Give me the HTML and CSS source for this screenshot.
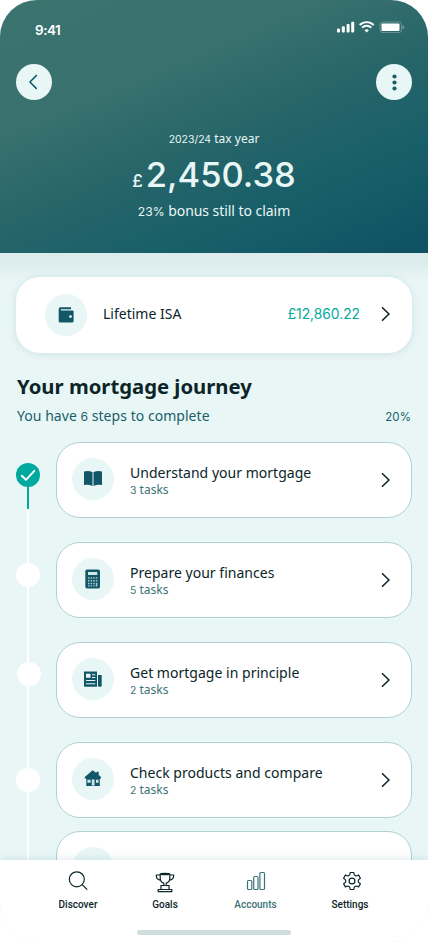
FILE: index.html
```html
<!DOCTYPE html>
<html lang="en">
<head>
<meta charset="utf-8">
<title>Mortgage journey</title>
<link rel="stylesheet" href="styles.css">
</head>
<body>
<div class="screen">
  <header class="hero">
    <div class="status">
      <span class="time">9:41</span>
      <svg class="signals" width="68" height="12" viewBox="0 0 68 12">
        <g fill="#fff">
          <rect x="0" y="7.500" width="3" height="4" rx="1"/><rect x="4.800" y="5.300" width="3" height="6.200" rx="1"/><rect x="9.600" y="3" width="3" height="8.500" rx="1"/><rect x="14.200" y="0.700" width="3" height="10.800" rx="1"/>
        </g>
        <path d="M22.700 4a10 10 0 0 1 14 0M25.100 6.700a6.400 6.400 0 0 1 9.200 0" fill="none" stroke="#fff" stroke-width="1.900"/>
        <path d="M29.700 11.500l-2.200-2.200a3.100 3.100 0 0 1 4.400 0z" fill="#fff"/>
        <rect x="43" y="1" width="21.500" height="10.500" rx="2.500" fill="none" stroke="#fff" stroke-opacity=".28"/>
        <rect x="44.500" y="2.500" width="18" height="7.500" rx="1" fill="#fff"/>
        <path d="M65.500 4.200q1.800.7 1.800 2t-1.800 2z" fill="#fff" fill-opacity=".35"/>
      </svg>
    </div>
    <div class="actions">
      <button class="round" aria-label="Back"><svg width="36" height="36" viewBox="0 0 36 36"><path d="M20.300 11.600L13.900 18l6.400 6.400" fill="none" stroke="#125767" stroke-width="1.500" stroke-linecap="round" stroke-linejoin="round"/></svg></button>
      <button class="round" aria-label="More"><svg width="36" height="36" viewBox="0 0 36 36" fill="#195f69"><circle cx="18.500" cy="12.500" r="2.100"/><circle cx="18.500" cy="18.500" r="2.100"/><circle cx="18.500" cy="24.500" r="2.100"/></svg></button>
    </div>
    <div class="year"><span class="num">2023/24</span> tax year</div>
    <div class="total"><span class="currency">£</span><span class="amount">2,450.38</span></div>
    <div class="bonus"><span class="num">23%</span> bonus still to claim</div>
  </header>

  <main class="content">
    <section class="account">
      <span class="badge"><svg width="42" height="42" viewBox="0 0 42 42"><path d="M15.300 13.200H26v2H15.800q-.5.900.3 1.200H27.400q1.200 0 1.200 1.200V27q0 1.500-1.500 1.500H15.200q-1.500 0-1.500-1.500V15q0-1.800 1.600-1.800z" fill="#125767"/><circle cx="25.500" cy="22.600" r="1.300" fill="#fff"/></svg></span>
      <span class="account-name">Lifetime ISA</span>
      <span class="balance">£12,860.22</span>
      <svg class="chev" width="10" height="16" viewBox="0 0 10 16"><path d="M1.500 1.700L8 8l-6.500 6.300"/></svg>
    </section>

    <h1>Your mortgage journey</h1>
    <div class="summary"><span>You have <span class="num">6</span> steps to complete</span><span class="percent">20%</span></div>

    <section class="journey">
      <div class="rail">
        <span class="dot done"><svg width="24" height="24" viewBox="0 0 24 24"><path d="M5.800 12.800l4.200 4 8.300-9" fill="none" stroke="#fff" stroke-width="1.900" stroke-linecap="round" stroke-linejoin="round"/></svg></span>
        <span class="line complete"></span><span class="line first"></span>
        <span class="dot"></span><span class="line second"></span>
        <span class="dot shifted"></span><span class="line third"></span>
        <span class="dot"></span><span class="line last"></span>
      </div>
      <div class="steps">
        <article class="step">
          <span class="badge"><svg width="42" height="42" viewBox="0 0 42 42"><path d="M20.500 14.200v13.700q-3.600-1.700-8.500-1V13.500q4.800-1.300 8.500.7zM21.500 14.200v13.700q3.600-1.700 8.500-1V13.500q-4.800-1.300-8.500.7z" fill="#125767"/><path d="M21 14.100v13.600" stroke="#78a3aa"/></svg></span>
          <div class="copy"><h2>Understand your mortgage</h2><p><span class="num">3</span> tasks</p></div>
          <svg class="chev" width="10" height="16" viewBox="0 0 10 16"><path d="M1.500 1.700L8 8l-6.500 6.300"/></svg>
        </article>
        <article class="step">
          <span class="badge"><svg width="42" height="42" viewBox="0 0 42 42"><rect x="13.300" y="11.500" width="14.700" height="19" rx="1.800" fill="#125767"/><path d="M16 14h9.300v3H16z" fill="#d3e6e7"/><path d="M16 19.200h1.500v1.500H16zM18.600 19.200h1.500v1.500h-1.500zM21.200 19.200h1.500v1.500h-1.500zM23.800 19.200h1.500v1.500h-1.500zM16 21.900h1.500v1.500H16zM18.600 21.900h1.500v1.500h-1.500zM21.200 21.900h1.500v1.500h-1.500zM23.800 21.900h1.500v1.500h-1.500zM16 24.700h1.500v1.500H16zM18.600 24.700h1.500v1.500h-1.500zM21.200 24.700h1.500v1.500h-1.500zM23.800 24.700h1.500v3.900h-1.500zM16 27.200h1.500v1.400H16zM18.600 27.200h1.500v1.400h-1.500zM21.200 27.200h1.500v1.400h-1.500z" fill="#a9c9cd"/></svg></span>
          <div class="copy"><h2>Prepare your finances</h2><p><span class="num">5</span> tasks</p></div>
          <svg class="chev" width="10" height="16" viewBox="0 0 10 16"><path d="M1.500 1.700L8 8l-6.500 6.300"/></svg>
        </article>
        <article class="step">
          <span class="badge"><svg width="42" height="42" viewBox="0 0 42 42"><path d="M12 13.500h13v15.300H13q-1 0-1-1zM26 17h3.700v10.500q0 1.300-1.300 1.300H27q-1 0-1-1z" fill="#125767"/><path d="M14 15.700h4.500v4H14zM20 16.200h3.300v1.100H20zM20 19h3.300v1.100H20zM14 22h9.300v1.100H14zM14 25.200h9.300v1.100H14z" fill="#e9f6f6"/></svg></span>
          <div class="copy"><h2>Get mortgage in principle</h2><p><span class="num">2</span> tasks</p></div>
          <svg class="chev" width="10" height="16" viewBox="0 0 10 16"><path d="M1.500 1.700L8 8l-6.500 6.300"/></svg>
        </article>
        <article class="step">
          <span class="badge"><svg width="42" height="42" viewBox="0 0 42 42"><path d="M12.800 19l7.800-6.700 3.800 2.800v-1.300h2.300V17l2.300 2v1.600h-1.200v7.500H14.300v-7.500h-1.500z" fill="#125767"/><path d="M15.500 21.800h3v3h-3zM19.800 21.500h2.700v6h-2.700zM24 21.800h2.500v3H24z" fill="#e9f6f6"/><path d="M17 21.800v3M21.100 22v5.500M25.200 21.800v3" stroke="#78a3aa" stroke-width=".4"/></svg></span>
          <div class="copy"><h2>Check products and compare</h2><p><span class="num">2</span> tasks</p></div>
          <svg class="chev" width="10" height="16" viewBox="0 0 10 16"><path d="M1.500 1.700L8 8l-6.500 6.300"/></svg>
        </article>
        <article class="step partial"><span class="badge"></span></article>
      </div>
    </section>
  </main>

  <nav class="tabs">
    <div class="tab-row">
      <div class="tab"><svg width="24" height="24" viewBox="0 0 24 24"><circle cx="10.800" cy="10.300" r="7.500"/><path d="M16.200 15.700l5 5"/></svg><span>Discover</span></div>
      <div class="tab"><svg width="24" height="24" viewBox="0 0 24 24"><path d="M7.200 5v4q0 4.300 3.600 5.200v2.300h2.400v-2.300q3.600-.9 3.600-5.200V5M7.200 6H3.400v1.300q0 3.300 4.500 4M16.800 6h3.800v1.300q0 3.300-4.500 4M8 16.500h8v4H8zM5.200 20.500h13.600v2.200H5.200z"/><ellipse cx="12" cy="5" rx="4.800" ry=".7"/></svg><span>Goals</span></div>
      <div class="tab active"><svg width="24" height="24" viewBox="0 0 24 24"><rect x="3.500" y="11.500" width="4.300" height="9" rx="1"/><rect x="9.700" y="7.500" width="4.300" height="13" rx="1"/><rect x="15.900" y="3.500" width="4.600" height="17" rx="1"/></svg><span>Accounts</span></div>
      <div class="tab"><svg width="24" height="24" viewBox="0 0 24 24"><circle cx="12" cy="12" r="2.900"/><path d="M10.200 3.500h3.600l.5 2.500 1.800 1 2.500-.9 1.800 3.100-2 1.700v2.200l2 1.700-1.800 3.100-2.500-.9-1.800 1-.5 2.500h-3.600L9.700 18l-1.800-1-2.500.9-1.800-3.100 2-1.700v-2.200l-2-1.700 1.800-3.100 2.500.9 1.800-1z" stroke-linejoin="round"/></svg><span>Settings</span></div>
    </div>
    <div class="home"></div>
  </nav>
</div>
</body>
</html>
```

FILE: styles.css
```css
* { box-sizing: border-box; }
body { margin: 0; background: #fff; font-family: "Noto Sans", sans-serif; color: #0b2528; }
h1, h2, p { margin: 0; }
.screen { width: 428px; height: 942px; display: flex; flex-direction: column; overflow: hidden; border-radius: 37px; background: #e9f6f6; }
.num { font-family: Inter, sans-serif; font-size: .87em; line-height: 1; }
.hero { height: 253px; flex: none; color: #e9f6f6; background: linear-gradient(157deg, #3b736f 0%, #38716e 32%, #286669 51%, #195f69 73%, #0e5163 100%); text-align: center; }
.status { display: flex; justify-content: space-between; height: 64px; padding: 20px 23px 0 35px; }
.time { font: 600 13.500px/20px Inter, sans-serif; letter-spacing: -.5px; color: #fff; }
.signals { display: block; margin-top: 1px; }
.actions { display: flex; justify-content: space-between; padding: 0 16px; height: 66px; }
.round { width: 36px; height: 36px; padding: 0; border: 0; border-radius: 50%; background: #e9f6f6; }
.round svg { display: block; }
.year { font-size: 12px; line-height: 18px; }
.total { display: flex; justify-content: center; align-items: baseline; height: 52px; line-height: 53px; font-family: Inter, sans-serif; gap: 3px; }
.currency { font-size: 17px; font-weight: 500; }
.amount { font-size: 34.500px; font-weight: 500; }
.bonus { font-size: 14px; line-height: 22px; letter-spacing: -.05px; }
.content { height: 607px; flex: none; overflow: hidden; padding: 24px 16px 0; background: linear-gradient(#dcecec 0, #dcecec 9px, #e9f6f6 28px); }
.account { height: 76px; border-radius: 24px; background: #fff; display: flex; align-items: center; padding: 0 21px 0 29px; box-shadow: 0 1px 9px #12576720; }
.badge { width: 42px; height: 42px; flex: none; border-radius: 50%; background: #e9f6f6; }
.badge svg { display: block; }
.account-name { font-size: 14px; margin: 0 0 3px 16px; }
.balance { margin: 0 21px 2px auto; font: 13.800px Inter, sans-serif; color: #00a99d; }
.chev { flex: none; margin-bottom: 2px; fill: none; stroke: #0b2528; stroke-width: 1.600; stroke-linecap: round; stroke-linejoin: round; }
h1 { margin: 19px 1px 0; font-size: 20.300px; line-height: 28px; font-weight: 700; }
.summary { display: flex; justify-content: space-between; margin: 5px 1px 0; font-size: 14px; line-height: 22px; color: #195f69; letter-spacing: .04px; }
.percent { font: 11.500px/24px Inter, sans-serif; height: 22px; }
.journey { display: flex; gap: 16px; margin-top: 15px; }
.rail { width: 24px; flex: none; display: flex; flex-direction: column; align-items: center; padding-top: 21px; }
.dot { width: 24px; height: 24px; border-radius: 50%; background: #fff; flex: none; }
.dot.done { background: #00a99d; }
.dot svg { display: block; }
.shifted { margin-left: 2px; }
.line { width: 2px; flex: none; background: #fff; }
.complete { height: 22px; background: #00a99d; }
.first { height: 54px; }
.second { height: 75px; }
.third { height: 82px; }
.last { height: 80px; }
.steps { flex: 1; }
.step { height: 76px; margin-bottom: 24px; padding: 0 20px 2px 15px; display: flex; align-items: center; border: 1px solid #b1d2d2; border-radius: 24px; background: #fff; }
.step .chev { margin: 2px 0 0; }
.copy { margin: 2px 0 0 16px; flex: 1; }
.step h2 { font-size: 14px; line-height: 19px; font-weight: 400; letter-spacing: .02px; }
.step p { font-size: 12px; line-height: 16px; color: #3b7376; }
.step.partial { margin-top: -11px; }
.tabs { position: relative; height: 82px; flex: none; background: #fff; box-shadow: 0 -1px 9px #12576720; }
.tab-row { display: grid; grid-template-columns: 84px 90px 91px 98px; margin-left: 36px; padding-top: 9px; }
.tab { display: flex; flex-direction: column; align-items: center; font: 500 10px/14px Roboto, sans-serif; }
.tab svg { fill: none; stroke: currentColor; stroke-width: 1.200; margin-bottom: 5px; }
.tab:last-child svg { margin-left: 3px; }
.active { color: #3b7376; }
.home { width: 154px; height: 5px; margin: 18px auto 0; border-radius: 3px; background: #d0dddd; }
```
